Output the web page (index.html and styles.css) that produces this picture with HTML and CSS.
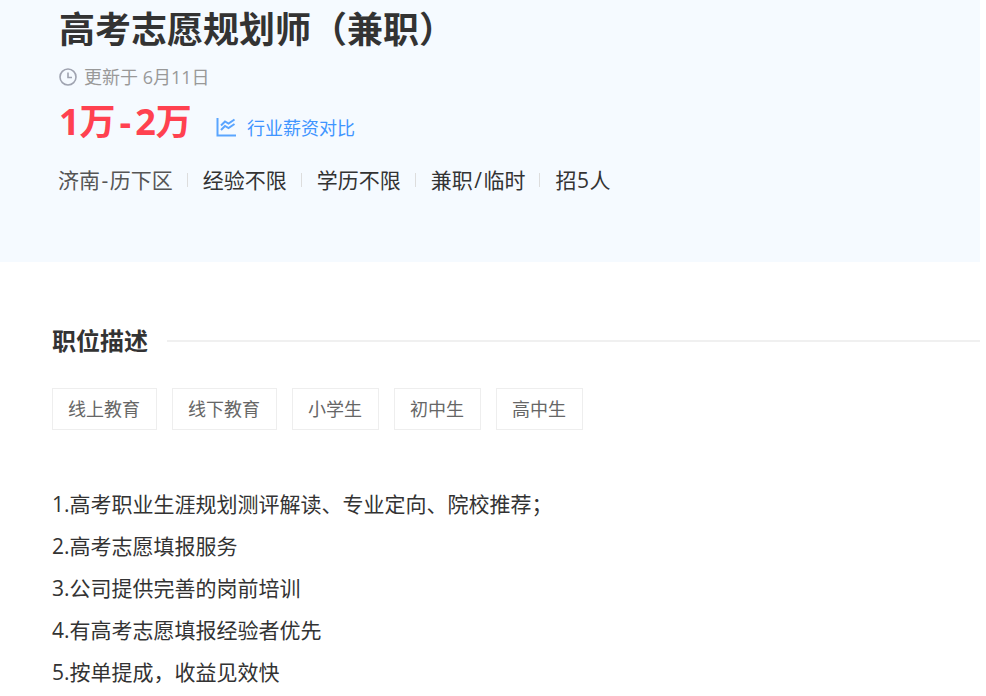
FILE: index.html
```html
<!DOCTYPE html>
<html lang="zh-CN">
<head>
<meta charset="utf-8">
<title>高考志愿规划师（兼职）</title>
<link rel="stylesheet" href="styles.css">
</head>
<body>
<div class="page">
  <header class="hero">
    <h1 class="title">高考志愿规划师（兼职）</h1>
    <div class="updated">
      <svg class="clock" width="18" height="18" viewBox="0 0 18 18" fill="none" stroke="#9fa3b0" stroke-width="1.6"><circle cx="9" cy="9" r="8"/><path d="M9 4.5V9.5H13"/></svg>
      <span>更新于 6月11日</span>
    </div>
    <div class="pay">
      <span class="salary">1万<span class="dash">-</span>2万</span>
      <a class="compare">
        <svg width="20" height="20" viewBox="0 0 20 20" fill="none" stroke="#5aa5ff" stroke-width="2"><path d="M1.5 1V18.5H20"/><path d="M5 8.5L9 4.5L12.5 6.5L18.5 2.5"/><path d="M5 13L9 9L12.5 11L18.5 7"/></svg>
        <span>行业薪资对比</span>
      </a>
    </div>
    <ul class="facts">
      <li class="city">济南<span class="dash">-</span>历下区</li>
      <li>经验不限</li>
      <li>学历不限</li>
      <li>兼职<span class="dash">/</span>临时</li>
      <li>招<span class="num">5</span>人</li>
    </ul>
  </header>
  <section class="desc">
    <div class="heading">
      <h2>职位描述</h2>
      <span class="rule"></span>
    </div>
    <div class="tags">
      <span class="tag">线上教育</span>
      <span class="tag">线下教育</span>
      <span class="tag">小学生</span>
      <span class="tag">初中生</span>
      <span class="tag">高中生</span>
    </div>
    <div class="body">
      <p>1.高考职业生涯规划测评解读、专业定向、院校推荐；</p>
      <p>2.高考志愿填报服务</p>
      <p>3.公司提供完善的岗前培训</p>
      <p>4.有高考志愿填报经验者优先</p>
      <p>5.按单提成，收益见效快</p>
    </div>
  </section>
</div>
</body>
</html>
```
FILE: styles.css
```css
* { box-sizing: border-box; }
html, body { margin: 0; padding: 0; background: #fff; overflow: hidden; }
body {
  height: 696px;
  font-family: "Open Sans", "Noto Sans CJK SC", sans-serif;
  color: #333;
}
.page { width: 980px; }
.hero {
  height: 262px;
  background: #f5faff;
  padding: 4px 0 0 59px;
}
.title {
  margin: 0;
  font-size: 36px;
  line-height: 52px;
  font-weight: 700;
  color: #333;
}
.updated {
  margin-top: 9px;
  display: flex;
  align-items: center;
  gap: 7px;
  height: 22px;
  font-size: 18px;
  color: #999;
}
.clock { margin-top: 2px; }
.pay {
  margin-top: 10px;
  display: flex;
  align-items: center;
  height: 50px;
}
.salary {
  font-size: 36px;
  font-weight: 700;
  color: #ff4150;
  line-height: 50px;
  width: 157px;
}
.salary .dash { margin: 0 4px; }
.compare {
  display: flex;
  align-items: center;
  gap: 11px;
  margin-top: 10px;
  font-size: 18px;
  color: #3f95ff;
}
.facts {
  list-style: none;
  margin: 19px 0 0 -1px;
  padding: 0;
  display: flex;
  font-size: 21px;
  line-height: 28px;
  color: #333;
}
.facts li { position: relative; padding-right: 30px; }
.facts .city { color: #555; }
.facts .dash { margin: 0 1.5px; }
.facts .num { margin: 0 0.5px; }
.facts li + li::before {
  content: "";
  position: absolute;
  left: -16px;
  top: 7px;
  width: 1px;
  height: 14px;
  background: #ddd;
}
.desc { padding: 60px 0 0 52px; }
.heading { display: flex; align-items: center; gap: 19px; height: 38px; }
.heading h2 {
  margin: 0;
  font-size: 24px;
  line-height: 38px;
  font-weight: 700;
  color: #333;
}
.rule { flex: 1; height: 2px; background: #f0f0f0; }
.tags { margin-top: 28px; display: flex; gap: 15px; }
.tag {
  height: 42px;
  padding: 0 16px 0 15px;
  border: 1px solid #eee;
  font-size: 18px;
  line-height: 40px;
  color: #666;
}
.body { margin-top: 53px; font-size: 21px; line-height: 42px; color: #333; }
.body p { margin: 0; }
```
